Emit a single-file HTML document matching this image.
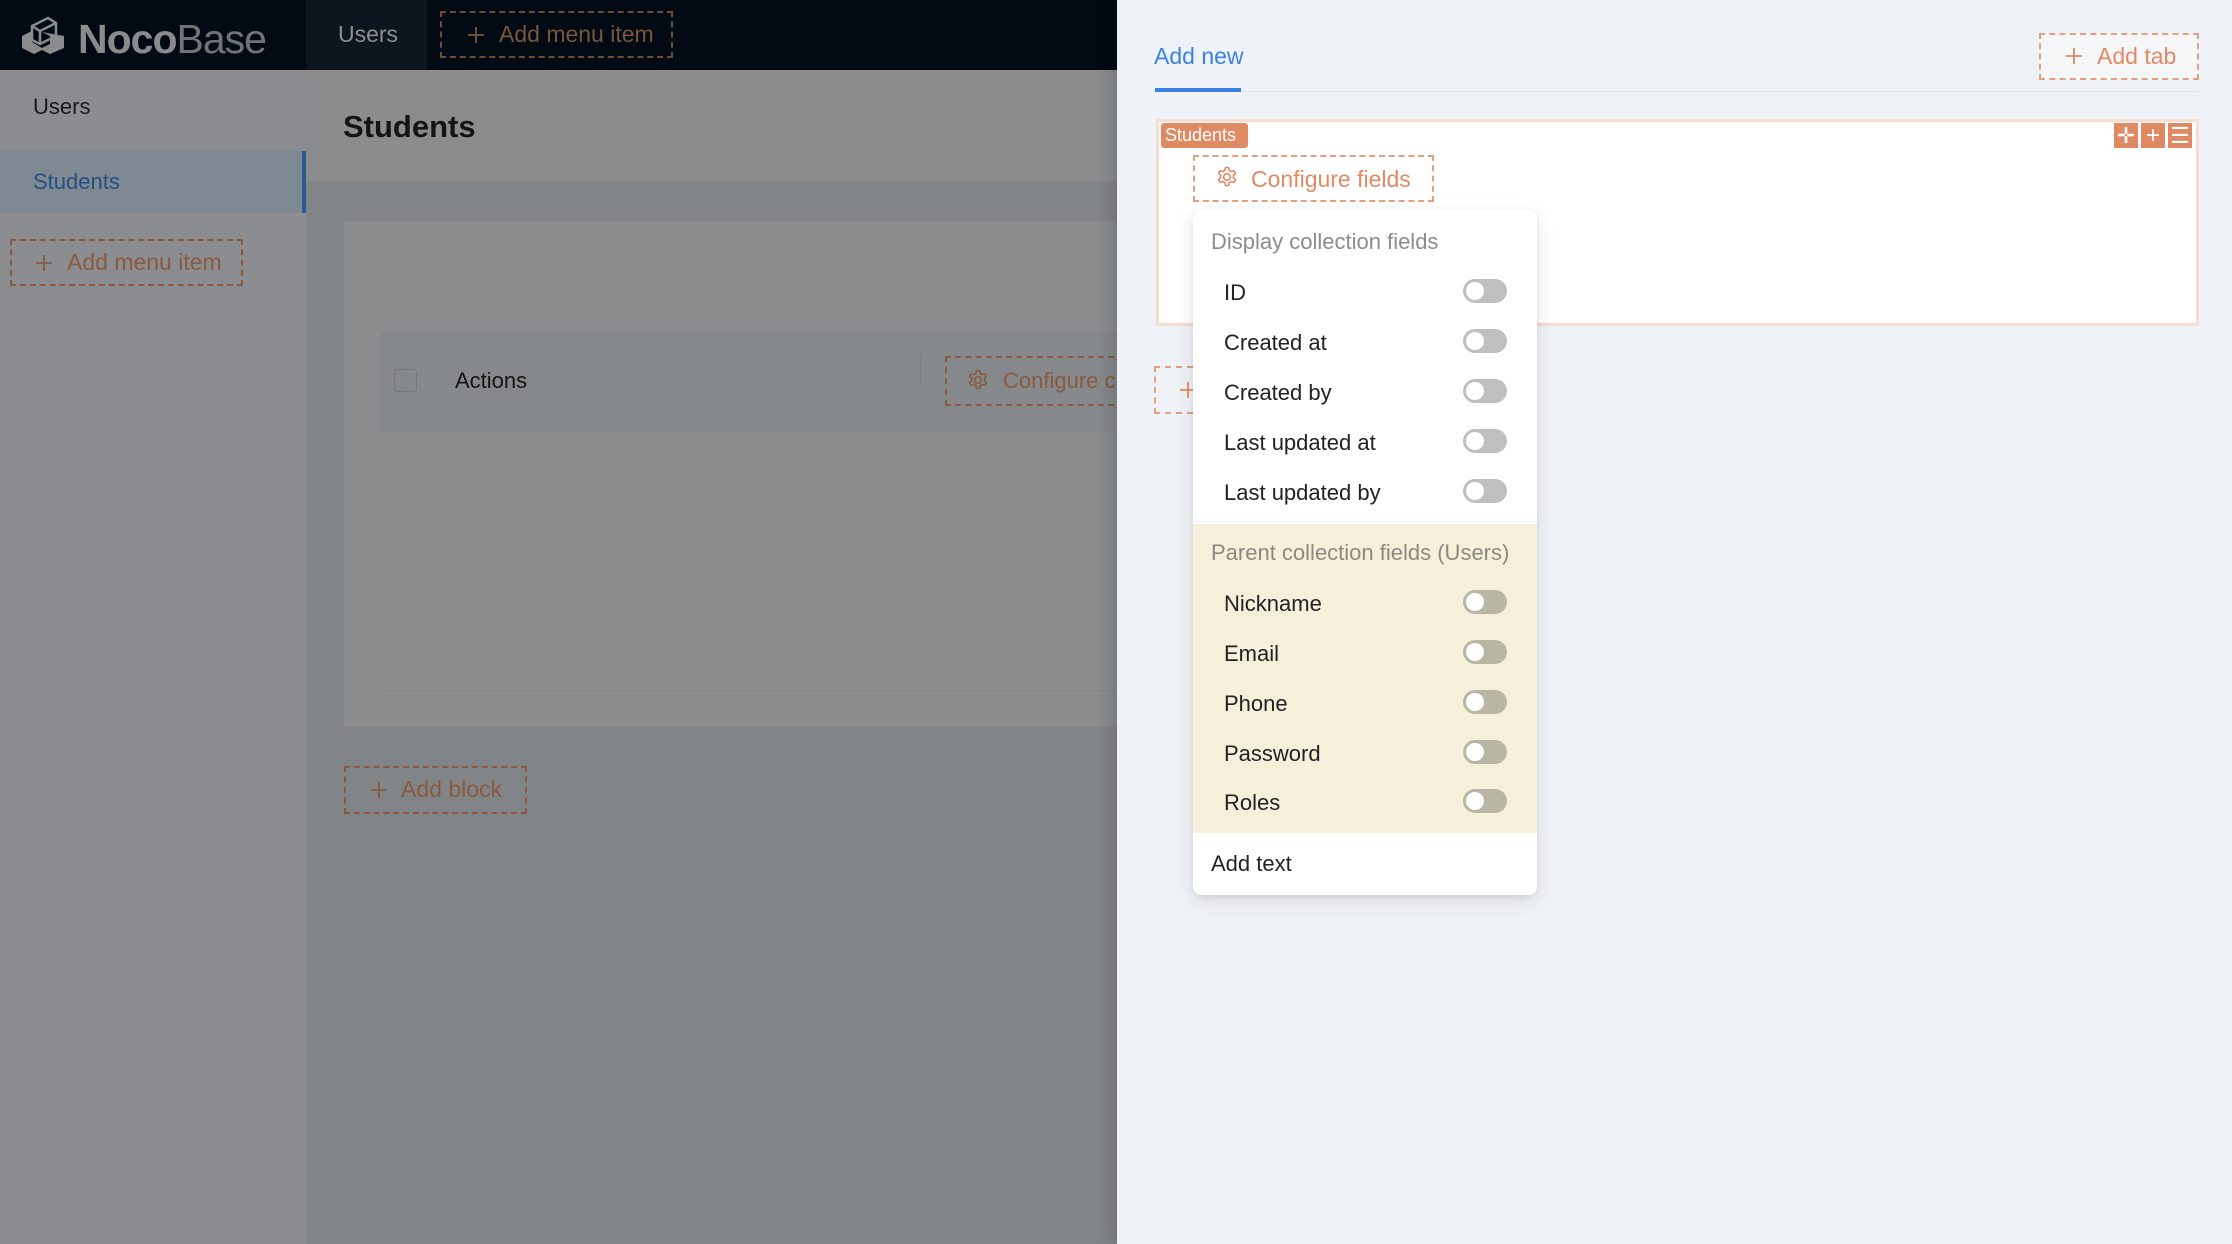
<!DOCTYPE html>
<html><head><meta charset="utf-8"><style>
*{box-sizing:border-box;margin:0;padding:0}
body{width:2232px;height:1244px;overflow:hidden;position:relative;font-family:"Liberation Sans",Arial,sans-serif;background:#828587}
.abs{position:absolute}
.dash{position:absolute;border:2px dashed #c47a55}
.txt{position:absolute;white-space:nowrap;line-height:1}
.tg{position:absolute;left:270px;width:44px;height:24px;border-radius:12px;background:#bfbfbf}
.tg:after{content:"";position:absolute;left:3px;top:3px;width:18px;height:18px;border-radius:50%;background:#fff}
.y .tg{background:#b9b6a4}
.row{position:absolute;left:0;width:344px;height:50px}
.row span{position:absolute;left:31px;top:14px;font-size:22px;color:#222;white-space:nowrap}
.row .tg{top:13px}
</style></head><body>
<svg width="0" height="0" style="position:absolute"><defs>
<g id="gear"><path d="M10.5 1.5 h3 l.6 2.8 a8 8 0 0 1 2.2 1.3 l2.7-.9 1.5 2.6 -2.1 1.9 a8 8 0 0 1 0 2.6 l2.1 1.9 -1.5 2.6 -2.7-.9 a8 8 0 0 1-2.2 1.3 l-.6 2.8 h-3 l-.6-2.8 a8 8 0 0 1-2.2-1.3 l-2.7.9 -1.5-2.6 2.1-1.9 a8 8 0 0 1 0-2.6 l-2.1-1.9 1.5-2.6 2.7.9 a8 8 0 0 1 2.2-1.3 z" fill="none" stroke="currentColor" stroke-width="1.6" stroke-linejoin="round"/><circle cx="12" cy="11" r="3.3" fill="none" stroke="currentColor" stroke-width="1.6"/></g>
<g id="plus"><path d="M10 2 V18 M2 10 H18" stroke="currentColor" stroke-width="1.8"/></g>
</defs></svg>
<!-- top bar -->
<div class="abs" style="left:0;top:0;width:1117px;height:70px;background:#020b14"></div>
<div class="abs" style="left:306px;top:0;width:121px;height:70px;background:#0d161f"></div>
<svg class="abs" style="left:20px;top:14px" width="46" height="42" viewBox="0 0 46 42"><path d="M2 22 L12 17 L12 28 L22 34 L30 30 L30 22 L22 18 L44 22 L44 34 L30 40 L22 36 L14 40 L2 34 Z" fill="#8a8b8d"/><path d="M12 12 L28 4 L36 9 L36 22 L20 30 L12 26 Z" fill="none" stroke="#8a8b8d" stroke-width="2.5"/><path d="M12 12 L20 17 L36 9 M20 17 L20 30" stroke="#8a8b8d" stroke-width="2.5" fill="none"/></svg>
<div class="txt" style="left:78px;top:19px;font-size:41px;color:#8a8b8d;letter-spacing:-1px"><b>Noco</b><span style="color:#727375">Base</span></div>
<div class="txt" style="left:338px;top:23px;font-size:23px;color:#8d8f92">Users</div>
<div class="dash" style="left:440px;top:11px;width:233px;height:47px;border-color:#6e4a37"></div>
<svg class="abs" style="left:466px;top:25px;color:#7a5540" width="20" height="20"><use href="#plus"/></svg>
<div class="txt" style="left:499px;top:23px;font-size:23px;color:#7a5540">Add menu item</div>
<!-- sidebar -->
<div class="abs" style="left:0;top:70px;width:306px;height:1174px;background:#8b8d90"></div>
<div class="txt" style="left:33px;top:96px;font-size:22px;color:#1a1a1a">Users</div>
<div class="abs" style="left:0;top:151px;width:306px;height:62px;background:#7f8994"></div>
<div class="abs" style="left:302px;top:151px;width:4px;height:62px;background:#2b5a95"></div>
<div class="txt" style="left:33px;top:171px;font-size:22px;color:#264f86">Students</div>
<div class="dash" style="left:10px;top:239px;width:233px;height:47px;border-color:#8a5a40"></div>
<svg class="abs" style="left:34px;top:253px;color:#8a5a40" width="20" height="20"><use href="#plus"/></svg>
<div class="txt" style="left:67px;top:251px;font-size:23px;color:#8a5a40">Add menu item</div>
<!-- main -->
<div class="abs" style="left:306px;top:70px;width:811px;height:111px;background:#8b8c8e"></div>
<div class="txt" style="left:343px;top:111px;font-size:31px;font-weight:bold;color:#141414">Students</div>
<div class="abs" style="left:344px;top:221px;width:773px;height:506px;background:#8b8c8e"></div>
<div class="abs" style="left:381px;top:332px;width:736px;height:99px;background:#86898b"></div>
<div class="abs" style="left:394px;top:369px;width:23px;height:23px;border:1.5px solid #777;border-radius:3px"></div>
<div class="txt" style="left:455px;top:370px;font-size:22px;color:#141414">Actions</div>
<div class="abs" style="left:920px;top:355px;width:1px;height:30px;background:#7d8082"></div>
<div class="dash" style="left:945px;top:356px;width:200px;height:50px;border-color:#8a5a40"></div>
<svg class="abs" style="left:966px;top:369px;color:#8a5a40" width="24" height="24"><use href="#gear"/></svg>
<div class="txt" style="left:1003px;top:370px;font-size:22px;color:#8a5a40">Configure c</div>
<div class="abs" style="left:381px;top:690px;width:736px;height:1px;background:#848688"></div>
<div class="dash" style="left:344px;top:766px;width:183px;height:48px;border-color:#8a5a40"></div>
<svg class="abs" style="left:369px;top:780px;color:#8a5a40" width="20" height="20"><use href="#plus"/></svg>
<div class="txt" style="left:401px;top:778px;font-size:23px;color:#8a5a40">Add block</div>
<!-- drawer -->
<div class="abs" style="left:1117px;top:0;width:1115px;height:1244px;background:#eff2f6;box-shadow:-6px 0 16px rgba(0,0,0,.15)"></div>
<div class="txt" style="left:1154px;top:45px;font-size:23px;color:#3b82e6">Add new</div>
<div class="abs" style="left:1154px;top:91px;width:1045px;height:1px;background:#e3e7ec"></div>
<div class="abs" style="left:1155px;top:88px;width:86px;height:4px;background:#3b82e6"></div>
<div class="dash" style="left:2039px;top:33px;width:160px;height:47px;background:#f5f6f8;border-color:#e2a080"></div>
<svg class="abs" style="left:2064px;top:46px;color:#e08a64" width="20" height="20"><use href="#plus"/></svg>
<div class="txt" style="left:2097px;top:45px;font-size:23px;color:#e08a64">Add tab</div>
<div class="abs" style="left:1156px;top:119px;width:1043px;height:207px;background:#fff;border:3px solid #f6ddd1"></div>
<div class="abs" style="left:1161px;top:123px;width:87px;height:25px;background:#e08a64;border-radius:3px;color:#fff;font-size:18px;line-height:25px;padding-left:4px">Students</div>
<div class="abs" style="left:2114px;top:123px;width:24px;height:25px;background:#e08a64;color:#fff;font-size:22px;line-height:25px;text-align:center">✛</div>
<div class="abs" style="left:2141px;top:123px;width:24px;height:25px;background:#e08a64;color:#fff;font-size:24px;line-height:25px;text-align:center">+</div>
<div class="abs" style="left:2168px;top:123px;width:24px;height:25px;background:#e08a64;color:#fff;font-size:22px;line-height:25px;text-align:center">☰</div>
<div class="dash" style="left:1193px;top:155px;width:241px;height:47px;border-color:#e2a080"></div>
<svg class="abs" style="left:1215px;top:166px;color:#e08a64" width="24" height="24"><use href="#gear"/></svg>
<div class="txt" style="left:1251px;top:168px;font-size:23px;color:#e08a64">Configure fields</div>
<div class="dash" style="left:1154px;top:366px;width:50px;height:48px;border-color:#e2a080"></div>
<svg class="abs" style="left:1178px;top:380px;color:#e08a64" width="20" height="20"><use href="#plus"/></svg>
<!-- dropdown -->
<div class="abs" style="left:1193px;top:210px;width:344px;height:685px;background:#fff;border-radius:8px;box-shadow:0 6px 20px rgba(0,0,0,.1),0 2px 6px rgba(0,0,0,.06);overflow:hidden">
 <div class="txt" style="left:18px;top:21px;font-size:22px;color:#8c8c8c">Display collection fields</div>
 <div class="row" style="top:56px"><span>ID</span><div class="tg"></div></div>
 <div class="row" style="top:106px"><span>Created at</span><div class="tg"></div></div>
 <div class="row" style="top:156px"><span>Created by</span><div class="tg"></div></div>
 <div class="row" style="top:206px"><span>Last updated at</span><div class="tg"></div></div>
 <div class="row" style="top:256px"><span>Last updated by</span><div class="tg"></div></div>
 <div class="abs" style="left:0;top:311px;width:344px;height:1px;background:#f0f0f0"></div>
 <div class="abs y" style="left:0;top:314px;width:344px;height:309px;background:#f6efd9">
  <div class="txt" style="left:18px;top:18px;font-size:22px;color:#8c8a80">Parent collection fields (Users)</div>
  <div class="row" style="top:53px"><span>Nickname</span><div class="tg"></div></div>
  <div class="row" style="top:103px"><span>Email</span><div class="tg"></div></div>
  <div class="row" style="top:153px"><span>Phone</span><div class="tg"></div></div>
  <div class="row" style="top:203px"><span>Password</span><div class="tg"></div></div>
  <div class="row" style="top:252px"><span>Roles</span><div class="tg"></div></div>
 </div>
 <div class="txt" style="left:18px;top:643px;font-size:22px;color:#222">Add text</div>
</div>
</body></html>
